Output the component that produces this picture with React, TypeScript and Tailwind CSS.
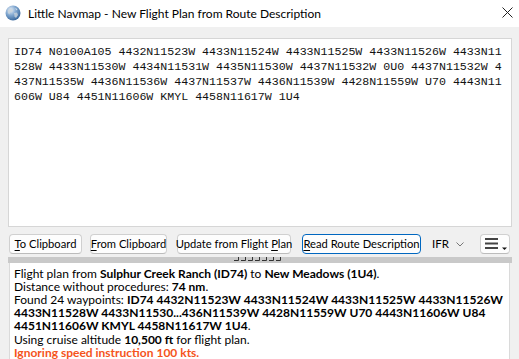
import React from "react";

const ui = "font-['Segoe_UI',Lato,sans-serif]";

const routeLines = [
  "ID74 N0100A105 4432N11523W 4433N11524W 4433N11525W 4433N11526W 4433N11",
  "528W 4433N11530W 4434N11531W 4435N11530W 4437N11532W 0U0 4437N11532W 4",
  "437N11535W 4436N11536W 4437N11537W 4436N11539W 4428N11559W U70 4443N11",
  "606W U84 4451N11606W KMYL 4458N11617W 1U4",
];

function Globe() {
  return (
    <svg width="16" height="16" viewBox="0 0 16 16">
      <defs>
        <radialGradient id="g" cx="0.35" cy="0.3" r="0.8">
          <stop offset="0" stopColor="#e6eef7" />
          <stop offset="0.45" stopColor="#7fa6cf" />
          <stop offset="1" stopColor="#2d5d93" />
        </radialGradient>
      </defs>
      <circle cx="8" cy="8" r="7.5" fill="url(#g)" />
      <path d="M3 5 L6 3.5 L8 5 L7 7 L5 7.5 L4.5 9.5 L3 8 Z" fill="#c9d3dc" opacity="0.85" />
      <path d="M9 8 L12 7.5 L13 10 L11 13 L9.5 11.5 Z" fill="#c9d3dc" opacity="0.8" />
      <path d="M10 3 L12.5 4 L11.5 5.5 Z" fill="#dfe6ec" opacity="0.8" />
    </svg>
  );
}

function Btn({ children, w, focus }: { children: React.ReactNode; w: string; focus?: boolean }) {
  return (
    <div
      className={`${w} shrink-0 h-[20px] flex items-center justify-center rounded-[4px] bg-[#fdfdfd] text-[11.2px] text-black ${
        focus ? "border border-[#0067c0]" : "border border-[#d0d0d0] border-b-[#bcbcbc]"
      }`}
    >
      <span className="whitespace-nowrap leading-[14px]">{children}</span>
    </div>
  );
}

function U({ children }: { children: React.ReactNode }) {
  return <span className="underline underline-offset-2">{children}</span>;
}

// one line of the result panel: runs are [text, bold]
function Line({ runs, className = "" }: { runs: [string, boolean][]; className?: string }) {
  return (
    <div className={`h-[13px] flex whitespace-pre overflow-visible ${className}`}>
      {runs.map(([t, b], i) => (
        <span key={i} className={`block h-[13px] leading-[13px] ${b ? "font-bold" : ""}`}>
          {t}
        </span>
      ))}
    </div>
  );
}

export default function App() {
  return (
    <div className={`w-[519px] h-[359px] overflow-hidden bg-[#f0f0f0] flex flex-col ${ui}`}>
      {/* title bar */}
      <div className="h-[27px] bg-white flex items-center shrink-0">
        <div className="ml-[5px] mt-[-1px]">
          <Globe />
        </div>
        <div className="ml-[7px] text-[12px] text-black">Little Navmap - New Flight Plan from Route Description</div>
        <svg className="ml-auto mr-[6px] mt-[-3px]" width="11" height="11" viewBox="0 0 11 11">
          <path d="M0.5 0.5 L10.5 10.5 M10.5 0.5 L0.5 10.5" stroke="#222" strokeWidth="1" />
        </svg>
      </div>

      <div className="flex-1 flex flex-col pl-[8px] pr-[7px] min-h-0">
        {/* route text */}
        <div className="mt-[11px] h-[189px] shrink-0 bg-white border border-[#d6d6d6] pl-[5px] pt-[5px] font-['Liberation_Mono',monospace] text-[11.62px] leading-[15px] text-[#111]">
          {routeLines.map((l, i) => (
            <div key={i} className="whitespace-pre">
              {l}
            </div>
          ))}
        </div>

        {/* buttons */}
        <div className="mt-[7px] h-[20px] flex items-center shrink-0">
          <div className="ml-[1px] shrink-0">
            <Btn w="w-[73px]">
              <U>T</U>o Clipboard
            </Btn>
          </div>
          <div className="ml-[8px] shrink-0">
            <Btn w="w-[77px]">
              <U>F</U>rom Clipboard
            </Btn>
          </div>
          <div className="ml-[10px] shrink-0">
            <Btn w="w-[114px]">
              Update from Flight <U>P</U>lan
            </Btn>
          </div>
          <div className="ml-[11px] shrink-0">
            <Btn w="w-[119px]" focus>
              <U>R</U>ead Route Description
            </Btn>
          </div>
          <div className="ml-[6px] w-[45px] shrink-0 h-[20px] flex items-center pl-[5px] text-[11.5px] text-black">
            <span>IFR</span>
            <svg className="ml-auto mr-[8px]" width="8" height="5" viewBox="0 0 8 5">
              <path d="M0.5 0.5 L4 4 L7.5 0.5" fill="none" stroke="#777" strokeWidth="1" />
            </svg>
          </div>
          <div className="ml-[8px] w-[30px] shrink-0 h-[20px] rounded-[4px] border border-[#d0d0d0] border-b-[#bcbcbc] bg-[#fdfdfd] flex items-center">
            <svg width="28" height="18" viewBox="0 0 28 18">
              <rect x="4" y="3" width="13" height="2" fill="#444" />
              <rect x="4" y="7.5" width="13" height="2" fill="#444" />
              <rect x="4" y="12" width="13" height="2" fill="#444" />
              <path d="M21 12.5 H26 L23.5 15 Z" fill="#111" />
            </svg>
          </div>
        </div>

        {/* splitter */}
        <div className="mt-[3px] h-[6px] shrink-0 bg-[#c9c9c9] flex justify-center">
          <svg className="ml-[-4px]" width="50" height="5" viewBox="0 0 50 5">
            {[0, 1, 2, 3, 4, 5, 6].map((i) => (
              <path key={i} d={`M${i * 7 + 1} 3.5 H${i * 7 + 5.5} V0`} fill="none" stroke="#333" strokeWidth="1" />
            ))}
          </svg>
        </div>

        {/* result */}
        <div className="flex-1 mr-[2px] ml-[1px] bg-white border-l border-r border-[#dadada] pl-[4px] pt-[4px] text-[12px] text-black">
          <Line
            runs={[
              ["Flight plan from ", false],
              ["Sulphur Creek Ranch (ID74)", true],
              [" to ", false],
              ["New Meadows (1U4)", true],
              [".", false],
            ]}
          />
          <Line
            runs={[
              ["Distance without procedures: ", false],
              ["74 nm", true],
              [".", false],
            ]}
          />
          <Line
            runs={[
              ["Found 24 waypoints: ", false],
              ["ID74 4432N11523W 4433N11524W 4433N11525W 4433N11526W", true],
            ]}
          />
          <Line runs={[["4433N11528W 4433N11530...436N11539W 4428N11559W U70 4443N11606W U84", true]]} />
          <Line
            runs={[
              ["4451N11606W KMYL 4458N11617W 1U4", true],
              [".", false],
            ]}
          />
          <Line
            className="mt-[1px]"
            runs={[
              ["Using cruise altitude ", false],
              ["10,500 ft", true],
              [" for flight plan.", false],
            ]}
          />
          <Line className="text-[#f5541c]" runs={[["Ignoring speed instruction 100 kts.", true]]} />
        </div>
      </div>
    </div>
  );
}
